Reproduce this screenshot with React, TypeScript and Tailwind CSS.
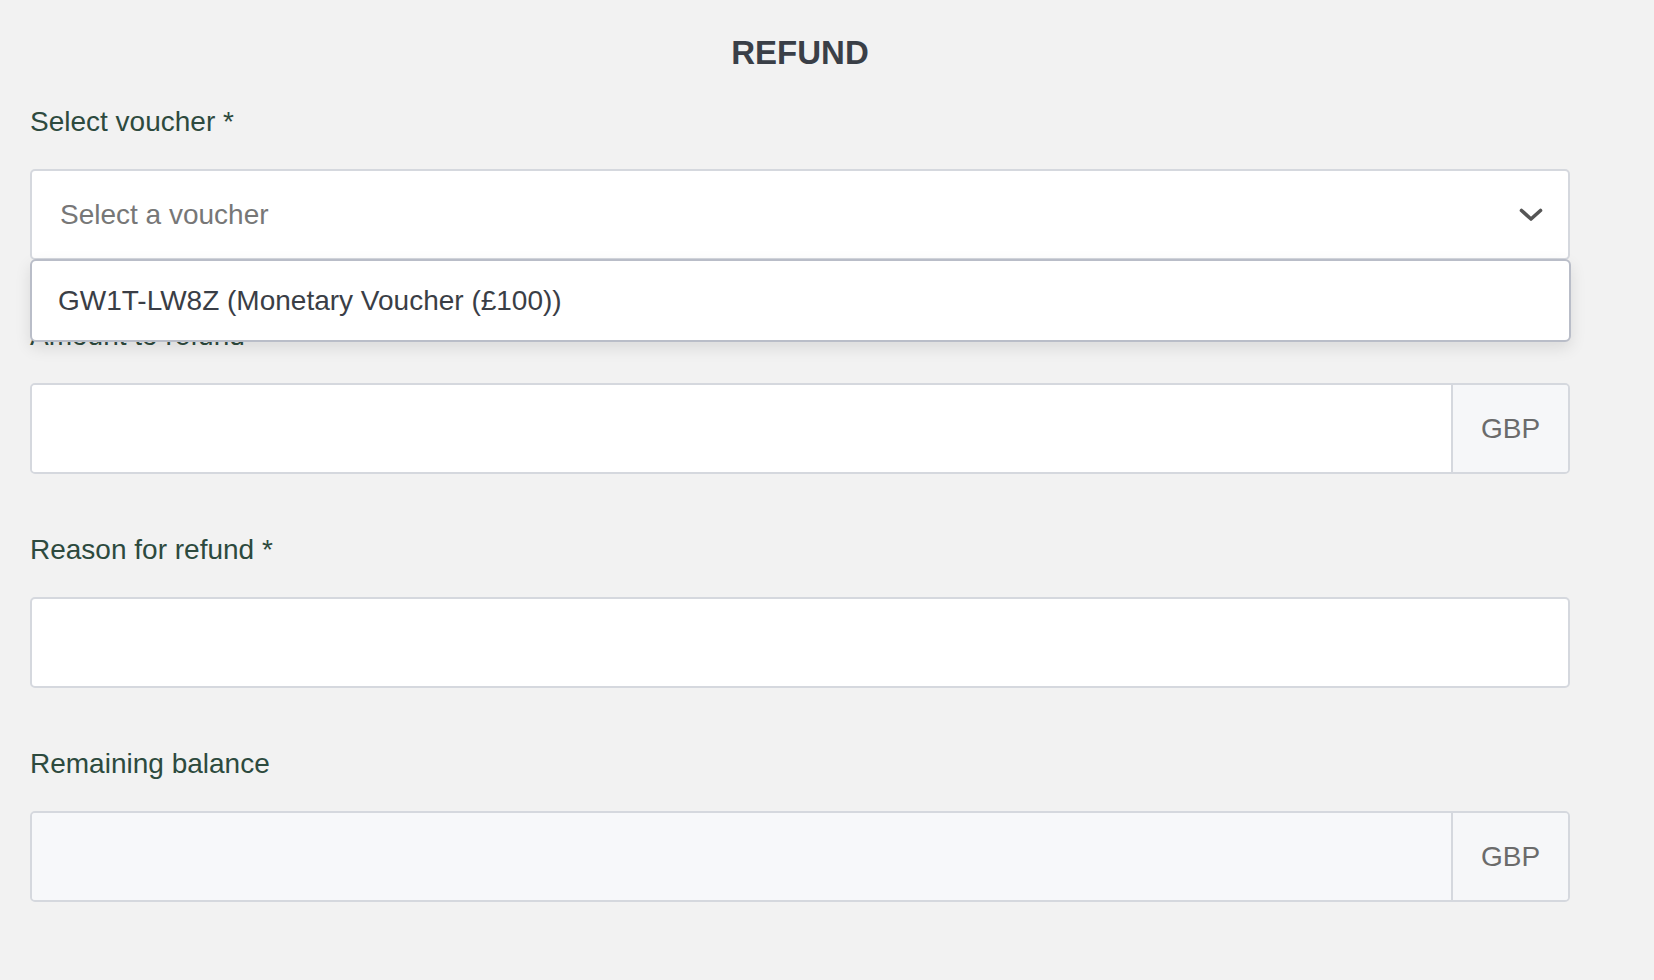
import React from "react";

function Label({ children }: { children: React.ReactNode }) {
  return (
    <div className="text-[28px] leading-[40px] text-[#2d4a3e] mb-[27px]">{children}</div>
  );
}

function AddonInput({ disabled }: { disabled?: boolean }) {
  return (
    <div className="flex h-[91px] rounded-[5px] border-2 border-[#d5d8de] overflow-hidden">
      <div className={disabled ? "flex-1 bg-[#f7f8fa]" : "flex-1 bg-white"} />
      <div className="w-[117px] border-l-2 border-[#d5d8de] bg-[#f6f7f9] flex items-center justify-center text-[28px] text-[#6b6b6b]">
        GBP
      </div>
    </div>
  );
}

export default function App() {
  return (
    <div className="min-h-screen bg-[#f2f2f2] font-['Liberation_Sans',Arial,sans-serif]">
      <div className="pl-[30px] pr-[84px] pt-[33px] pb-[60px]">
        <h1 className="text-center text-[33px] leading-[40px] font-bold text-[#3a3f47]">REFUND</h1>

        <div className="mt-[29px] mb-[56px]">
          <Label>Select voucher *</Label>
          <div className="relative">
            <div className="h-[91px] rounded-[5px] border-2 border-[#d5d8de] bg-white flex items-center justify-between pl-[28px] pr-[25px]">
              <span className="text-[28px] text-[#777777]">Select a voucher</span>
              <svg width="24" height="14" viewBox="0 0 24 14" fill="none">
                <polyline points="2.5,2.5 12,11 21.5,2.5" stroke="#555555" strokeWidth="3.6" strokeLinecap="round" strokeLinejoin="round" />
              </svg>
            </div>
            <div className="absolute left-0 right-[-1px] top-[calc(100%-1px)] h-[83px] z-10 rounded-[6px] border-2 border-[#b9bdc8] bg-white shadow-[0_6px_16px_rgba(0,0,0,0.10)] flex items-center pl-[26px]">
              <span className="text-[28px] text-[#3a3e46]">GW1T-LW8Z (Monetary Voucher (£100))</span>
            </div>
          </div>
        </div>

        <div className="mb-[56px]">
          <Label>Amount to refund</Label>
          <AddonInput />
        </div>

        <div className="mb-[56px]">
          <Label>Reason for refund *</Label>
          <div className="h-[91px] rounded-[5px] border-2 border-[#d5d8de] bg-white" />
        </div>

        <div>
          <Label>Remaining balance</Label>
          <AddonInput disabled />
        </div>
      </div>
    </div>
  );
}
